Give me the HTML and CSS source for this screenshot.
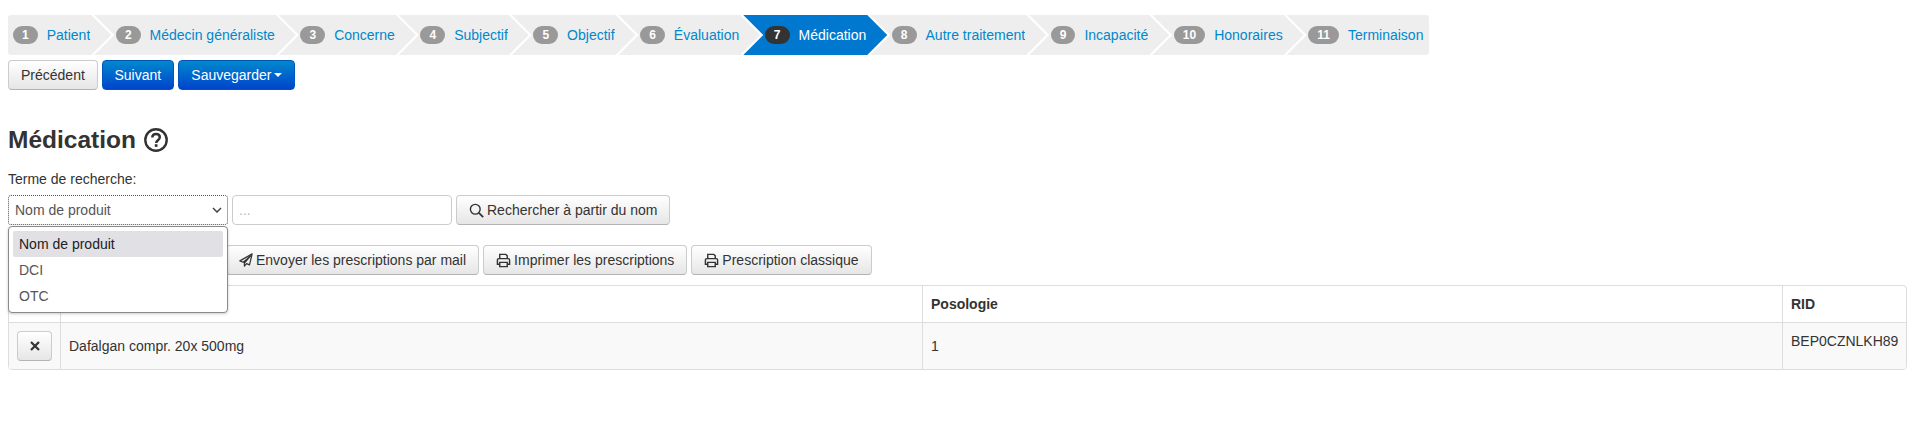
FILE: index.html
```html
<!DOCTYPE html>
<html>
<head>
    <title>Médication</title>
    <meta charset="UTF-8">
    <link rel="stylesheet" href="styles.css">
</head>
<body>
    <ul class="wizard">
        <li class="step first"><span class="badge">1</span><a>Patient</a></li>
        <li class="step"><span class="badge">2</span><a>Médecin généraliste</a></li>
        <li class="step"><span class="badge">3</span><a>Concerne</a></li>
        <li class="step"><span class="badge">4</span><a>Subjectif</a></li>
        <li class="step"><span class="badge">5</span><a>Objectif</a></li>
        <li class="step"><span class="badge">6</span><a>Évaluation</a></li>
        <li class="step active"><span class="badge">7</span><a>Médication</a></li>
        <li class="step"><span class="badge">8</span><a>Autre traitement</a></li>
        <li class="step"><span class="badge">9</span><a>Incapacité</a></li>
        <li class="step"><span class="badge">10</span><a>Honoraires</a></li>
        <li class="step last"><span class="badge">11</span><a>Terminaison</a></li>
    </ul>

    <div class="toolbar nav-buttons">
        <button class="btn">Précédent</button>
        <button class="btn btn-primary">Suivant</button>
        <button class="btn btn-primary btn-save">Sauvegarder<span class="caret"></span></button>
    </div>

    <h2 class="page-title">
        Médication
        <svg class="help-icon" viewBox="0 0 24 24" width="24" height="24">
            <circle cx="12" cy="12" r="10.7" fill="none" stroke="#333" stroke-width="2.4"/>
            <path d="M8.3 9.6c0-2.2 1.6-3.6 3.8-3.6s3.7 1.3 3.7 3.3c0 2.9-3.6 2.9-3.6 5.6" fill="none" stroke="#333" stroke-width="2.5"/>
            <rect x="10.8" y="16.2" width="2.7" height="2.7" fill="#333"/>
        </svg>
    </h2>

    <label class="search-label">Terme de recherche:</label>
    <div class="search-row">
        <div class="select-box">
            <div class="select-value">
                Nom de produit
                <svg viewBox="0 0 10 6" width="10" height="6"><path d="M1 1l4 4 4-4" fill="none" stroke="#444" stroke-width="1.5"/></svg>
            </div>
            <ul class="select-menu">
                <li class="selected">Nom de produit</li>
                <li>DCI</li>
                <li>OTC</li>
            </ul>
        </div>
        <input class="search-input" type="text" placeholder="...">
        <button class="btn">
            <svg class="icon" viewBox="0 0 16 16" width="15" height="15"><circle cx="6.7" cy="6.7" r="5.2" fill="none" stroke="#333" stroke-width="1.5"/><path d="M10.5 10.5l4.6 4.6" stroke="#333" stroke-width="1.9"/></svg>
            <span>Rechercher à partir du nom</span>
        </button>
    </div>

    <div class="toolbar action-buttons">
        <button class="btn btn-hidden-under"></button>
        <button class="btn">
            <svg class="icon" viewBox="0 0 16 16" width="14" height="14"><path d="M15 1L1 9l3.800 1.600L13 3.600 6.200 11.400V15l2.400-2.800 3.400 1.400z" fill="none" stroke="#333" stroke-width="1.400" stroke-linejoin="round"/></svg>
            <span>Envoyer les prescriptions par mail</span>
        </button>
        <button class="btn">
            <svg class="icon" viewBox="0 0 16 16" width="15" height="15"><path d="M4 6V1.500h6.500L12 3v3M4 12H1.500V7.500A1.500 1.500 0 0 1 3 6h10a1.500 1.500 0 0 1 1.500 1.500V12H12M4 10h8v4.500H4z" fill="none" stroke="#333" stroke-width="1.500"/></svg>
            <span>Imprimer les prescriptions</span>
        </button>
        <button class="btn">
            <svg class="icon" viewBox="0 0 16 16" width="15" height="15"><path d="M4 6V1.500h6.500L12 3v3M4 12H1.500V7.500A1.500 1.500 0 0 1 3 6h10a1.500 1.500 0 0 1 1.500 1.500V12H12M4 10h8v4.500H4z" fill="none" stroke="#333" stroke-width="1.500"/></svg>
            <span>Prescription classique</span>
        </button>
    </div>

    <div class="table-wrap">
        <table class="med-table">
            <thead>
                <tr>
                    <th class="col-remove"></th>
                    <th class="col-name"></th>
                    <th class="col-dose">Posologie</th>
                    <th>RID</th>
                </tr>
            </thead>
            <tbody>
                <tr>
                    <td>
                        <button class="btn btn-remove">
                            <svg viewBox="0 0 10 10" width="10" height="10"><path d="M1 1l8 8M9 1l-8 8" stroke="#333" stroke-width="2.2"/></svg>
                        </button>
                    </td>
                    <td>Dafalgan compr. 20x 500mg</td>
                    <td>1</td>
                    <td class="cell-top">BEP0CZNLKH89</td>
                </tr>
            </tbody>
        </table>
    </div>
</body>
</html>
```

FILE: styles.css
```css
body {
    margin: 0;
    padding: 15px 10px 0 8px;
    font-family: "Liberation Sans", Arial, sans-serif;
    font-size: 14px;
    line-height: 20px;
    color: #333;
    background-color: #fff;
}

/* Wizard steps */
.wizard {
    display: inline-flex;
    height: 40px;
    margin: 0;
    padding: 0;
    list-style: none;
    background-color: #eee;
    border-radius: 4px;
    vertical-align: top;
}

.step {
    position: relative;
    display: flex;
    align-items: center;
    height: 40px;
    padding: 0 1px 0 24.6px;
    box-sizing: border-box;
    white-space: nowrap;
    background-color: #eee;
}

.step a {
    color: #0088cc;
}

.step::before,
.step::after {
    content: "";
    position: absolute;
    top: 0;
    height: 40px;
}

.step::before {
    left: 100%;
    width: 23px;
    background-color: #fff;
    clip-path: polygon(0 0, 3px 0, 23px 50%, 3px 100%, 0 100%);
    z-index: 1;
}

/* starts 1px inside the step so no white shows at the fractional edge */
.step::after {
    left: calc(100% - 1px);
    width: 21px;
    background-color: #eee;
    clip-path: polygon(0 0, 1px 0, 21px 50%, 1px 100%, 0 100%);
    z-index: 2;
}

.step.first {
    padding-left: 5px;
    border-radius: 4px 0 0 4px;
}

.step.last {
    padding-right: 6px;
    border-radius: 0 4px 4px 0;
}

.step.last::before,
.step.last::after {
    display: none;
}

.step.active {
    background-color: #0078cf;
}

.step.active a {
    color: #fff;
}

.step.active::after {
    background-color: #0078cf;
}

.step.active .badge {
    background-color: #333;
}

.badge {
    display: inline-block;
    margin-right: 9px;
    padding: 0 9px;
    font-size: 12px;
    font-weight: bold;
    line-height: 18px;
    color: #fff;
    background-color: #999;
    border-radius: 9px;
}

/* Buttons */
.toolbar {
    display: flex;
    gap: 4px;
}

.btn {
    display: inline-flex;
    align-items: center;
    justify-content: center;
    height: 30px;
    padding: 0 12px;
    box-sizing: border-box;
    font-family: inherit;
    font-size: 14px;
    color: #333;
    white-space: nowrap;
    background-image: linear-gradient(to bottom, #fff, #e6e6e6);
    border: 1px solid #ccc;
    border-bottom-color: #b3b3b3;
    border-radius: 4px;
}

.btn-primary {
    padding: 0 11.6px;
    color: #fff;
    background-image: linear-gradient(to bottom, #0088cc, #0044cc);
    border-color: #0055bb;
}

.btn-save {
    padding: 0 12px 0 12.6px;
}

.caret {
    width: 0;
    height: 0;
    margin-left: 3px;
    border-top: 4px solid #fff;
    border-left: 4px solid transparent;
    border-right: 4px solid transparent;
}

.icon {
    margin-right: 3px;
    flex-shrink: 0;
}

.nav-buttons {
    margin-top: 5px;
}

.page-title {
    display: flex;
    align-items: center;
    gap: 8px;
    margin: 35px 0 0;
    font-size: 24.5px;
    line-height: 30px;
    color: #333;
}

.search-label {
    display: block;
    margin-top: 14px;
}

/* Search row */
.search-row {
    display: flex;
    align-items: center;
    gap: 4px;
    margin-top: 6px;
}

.select-box {
    position: relative;
    width: 220px;
}

.select-value {
    display: flex;
    align-items: center;
    justify-content: space-between;
    height: 30px;
    padding: 0 5px 0 6px;
    box-sizing: border-box;
    color: #555;
    border: 1px dotted #555;
    border-radius: 3px;
    background-color: #fff;
}

.select-menu {
    position: absolute;
    top: 31px;
    left: 0;
    width: 100%;
    height: 87px;
    margin: 0;
    padding: 4px;
    box-sizing: border-box;
    list-style: none;
    background-color: #fff;
    border: 1px solid #8a8a8a;
    border-radius: 4px;
    box-shadow: 0 1px 3px rgba(0, 0, 0, 0.2);
    color: #555;
    z-index: 10;
}

.select-menu li {
    height: 26px;
    padding: 0 6px;
    line-height: 26px;
}

.select-menu .selected {
    color: #222;
    background-color: #e1e0e5;
    border-radius: 2px;
}

.search-input {
    width: 220px;
    height: 30px;
    padding: 0 6px;
    box-sizing: border-box;
    font-family: inherit;
    font-size: 14px;
    border: 1px solid #ccc;
    border-radius: 4px;
}

.search-input::placeholder {
    color: #bbb;
}

.action-buttons {
    margin-top: 20px;
}

.btn-hidden-under {
    width: 214px;
}

/* Table */
.table-wrap {
    margin-top: 10px;
    border: 1px solid #ddd;
    border-radius: 4px;
    overflow: hidden;
}

.med-table {
    width: 100%;
    border-collapse: collapse;
    table-layout: fixed;
}

.med-table th,
.med-table td {
    padding: 8px;
    text-align: left;
    border-left: 1px solid #ddd;
}

.med-table th:first-child,
.med-table td:first-child {
    border-left: none;
}

.med-table th {
    height: 20px;
    vertical-align: top;
}

.med-table td {
    height: 30px;
    vertical-align: middle;
    background-color: #f9f9f9;
    border-top: 1px solid #ddd;
}

.med-table .cell-top {
    vertical-align: top;
}

.col-remove {
    width: 35px;
}

.col-name {
    width: 845px;
}

.col-dose {
    width: 843px;
}

.btn-remove {
    width: 35px;
    padding: 0;
}
```
